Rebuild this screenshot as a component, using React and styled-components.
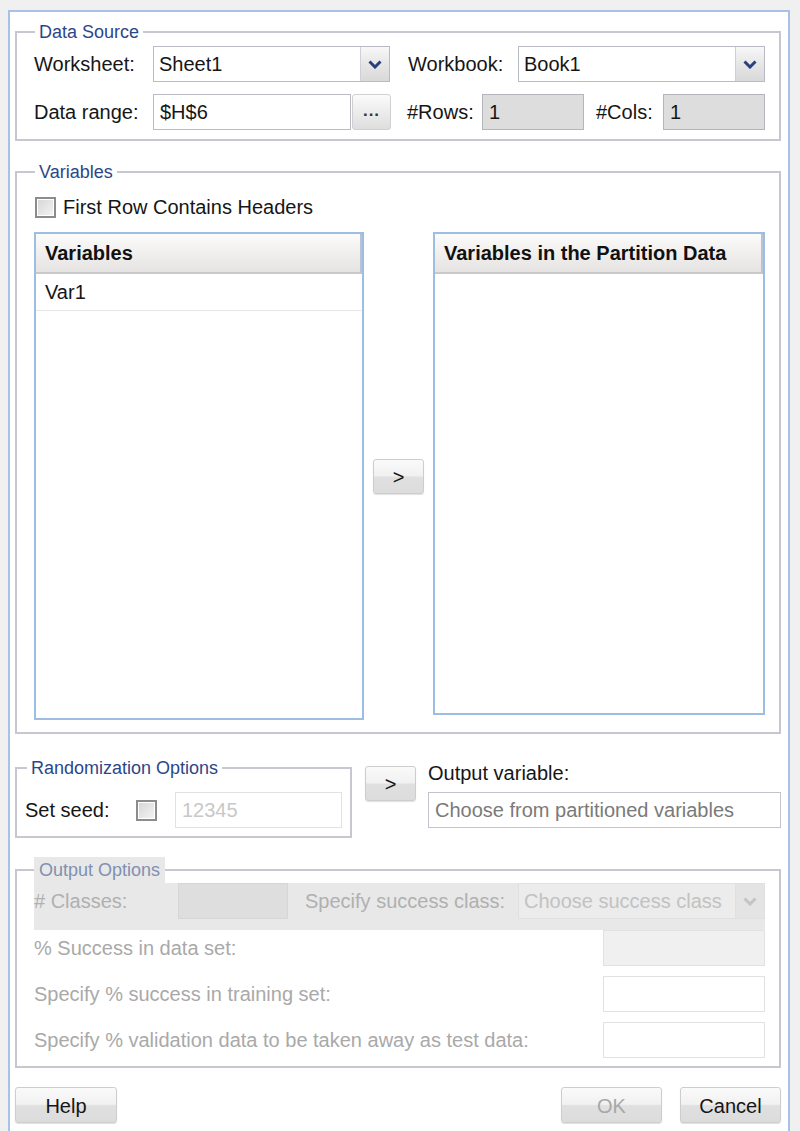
import React from 'react';
import styled, { createGlobalStyle } from 'styled-components';

const GlobalStyle = createGlobalStyle`
  html, body {
    margin: 0;
    padding: 0;
    background: #f0f0f0;
  }
  body {
    font-family: "Liberation Sans", Arial, sans-serif;
    color: #161616;
  }
`;

const Window = styled.div`
  box-sizing: border-box;
  margin: 10px 0 0 8px;
  width: 782px;
  min-height: 1121px;
  background: #fff;
  border: 2px solid #a6c2e6;
  border-bottom: none;
  padding: 9px 7px 0 5px;
`;

const Group = styled.fieldset`
  margin: ${p => p.$mt || 0}px 0 0;
  padding: ${p => p.$pad};
  border: 2px solid #c6c7d0;
  min-width: 0;
  width: ${p => (p.$w ? `${p.$w}px` : 'auto')};
  box-sizing: border-box;
`;

const Legend = styled.legend`
  margin-left: ${p => p.$offset}px;
  padding: 0 ${p => (p.$disabled ? 5 : 4)}px;
  font-size: 18px;
  line-height: ${p => (p.$disabled ? 26 : 22)}px;
  color: ${p => (p.$disabled ? '#8090b2' : '#2b4789')};
  background: ${p => (p.$disabled ? '#e8e8e8' : 'transparent')};
`;

const Row = styled.div`
  display: flex;
  align-items: center;
  height: 36px;
  margin-top: ${p => p.$mt || 0}px;
`;

const Label = styled.div`
  flex: ${p => (p.$w ? 'none' : 1)};
  width: ${p => (p.$w ? `${p.$w}px` : 'auto')};
  margin-left: ${p => p.$ml || 0}px;
  font-size: 20px;
  color: ${p => (p.$disabled ? '#a9a9a9' : '#161616')};
  white-space: nowrap;
`;

const Select = styled.div`
  display: flex;
  box-sizing: border-box;
  width: ${p => p.$w}px;
  height: 36px;
  border: 1px solid ${p => (p.$disabled ? '#e0e0e0' : '#b9bac6')};
  background: ${p => (p.$disabled ? '#ececec' : '#fff')};
`;

const Value = styled.div`
  flex: 1;
  display: flex;
  align-items: center;
  padding-left: 5px;
  font-size: 20px;
  color: ${p => p.$color || '#161616'};
  white-space: nowrap;
  overflow: hidden;
`;

const DropButton = styled.div`
  width: 28px;
  display: flex;
  align-items: center;
  justify-content: center;
  border-left: 1px solid ${p => (p.$disabled ? '#e0e0e0' : '#cfd0d6')};
  background: ${p =>
    p.$disabled ? '#e4e4e4' : 'linear-gradient(#f8f8f8, #e6e6e6 50%, #d9d9d9)'};
`;

const Input = styled.div`
  box-sizing: border-box;
  display: flex;
  align-items: center;
  width: ${p => p.$w}px;
  height: 36px;
  margin-left: ${p => p.$ml || 0}px;
  padding-left: 6px;
  border: 1px solid ${p => p.$border || '#b9bac6'};
  background: ${p => p.$bg || '#fff'};
  font-size: 20px;
  color: ${p => p.$color || '#161616'};
  white-space: nowrap;
`;

const SmallButton = styled.div`
  box-sizing: border-box;
  width: 39px;
  height: 36px;
  margin-left: 1px;
  display: flex;
  align-items: flex-end;
  justify-content: center;
  padding-bottom: 8px;
  border: 1px solid #cfcfd4;
  border-radius: 3px;
  background: linear-gradient(#fbfbfb, #ececec 50%, #dedede);
  font-size: 17px;
  font-weight: bold;
  letter-spacing: 1px;
  color: #333;
`;

const Button = styled.div`
  box-sizing: border-box;
  width: ${p => p.$w}px;
  height: ${p => p.$h || 36}px;
  margin-top: ${p => p.$mt || 0}px;
  margin-left: ${p => p.$ml || 0}px;
  padding-top: 2px;
  display: flex;
  align-items: center;
  justify-content: center;
  border: 1px solid #cdcdcd;
  border-radius: 3px;
  background: linear-gradient(#fafafa 0%, #f1f1f1 48%, #e0e0e0 52%, #dcdcdc 100%);
  box-shadow: 0 1px 1px rgba(0, 0, 0, 0.12);
  font-size: 20px;
  color: ${p => (p.$disabled ? '#a8a8a8' : '#161616')};
  align-self: ${p => p.$self || 'auto'};
  flex: none;
`;

const CheckBox = styled.div`
  box-sizing: border-box;
  width: 21px;
  height: 21px;
  flex: none;
  border: 2px solid #8c8c8c;
  background: linear-gradient(135deg, #d6d6d6, #f4f4f4);
  box-shadow: inset 0 0 0 1px #fff;
`;

const CheckRow = styled.label`
  display: flex;
  align-items: center;
  gap: 7px;
  margin-left: 1px;
  font-size: 20px;
  height: 21px;
`;

const Body = styled.div`
  padding: ${p => p.$pad};
`;

const ListsGrid = styled.div`
  display: grid;
  grid-template-columns: 330px 69px 332px;
  margin-top: 14px;
`;

const List = styled.div`
  box-sizing: border-box;
  height: ${p => p.$h}px;
  border: 2px solid #9dbde3;
  background: #fff;
`;

const ListHeader = styled.div`
  box-sizing: border-box;
  height: 40px;
  display: flex;
  align-items: center;
  padding-left: 9px;
  border-bottom: 2px solid #c9c9c9;
  border-right: 2px solid #b9c3d3;
  background: linear-gradient(#fbfbfa, #efedeb 60%, #e6e4e2);
  font-size: 20px;
  font-weight: bold;
  color: #111;
  white-space: nowrap;
`;

const ListItem = styled.div`
  height: 36px;
  display: flex;
  align-items: center;
  padding-left: 9px;
  border-bottom: 1px solid #e6e6e6;
  font-size: 20px;
`;

const MidRow = styled.div`
  display: flex;
  align-items: flex-start;
  margin-top: 23px;
`;

const OutputColumn = styled.div`
  margin-left: 12px;
  margin-top: 5px;
  display: flex;
  flex-direction: column;
  gap: 7px;
`;

const Band = styled.div`
  display: flex;
  align-items: flex-start;
  height: 47px;
  background: #e8e8e8;
`;

const BandLabel = styled.div`
  width: ${p => p.$w}px;
  margin-left: ${p => p.$ml || 0}px;
  height: 36px;
  display: flex;
  align-items: center;
  font-size: 20px;
  color: #b0b0b0;
  white-space: nowrap;
`;

const Footer = styled.div`
  display: flex;
  align-items: center;
  margin-top: 19px;
`;

const Spacer = styled.div`
  flex: 1;
`;

const Chevron = ({ color = '#2a3f7c' }) => (
  <svg width="14" height="9" viewBox="0 0 14 9">
    <path d="M1.5 1.5 L7 7 L12.5 1.5" fill="none" stroke={color} strokeWidth="3" />
  </svg>
);

export default function App() {
  return (
    <>
      <GlobalStyle />
      <Window>
        <Group $pad="0">
          <Legend $offset={18}>Data Source</Legend>
          <Body $pad="3px 14px 9px 17px">
            <Row>
              <Label $w={119}>Worksheet:</Label>
              <Select $w={237}>
                <Value>Sheet1</Value>
                <DropButton>
                  <Chevron />
                </DropButton>
              </Select>
              <Label $w={110} $ml={18}>Workbook:</Label>
              <Select $w={247}>
                <Value>Book1</Value>
                <DropButton>
                  <Chevron />
                </DropButton>
              </Select>
            </Row>
            <Row $mt={12}>
              <Label $w={119}>Data range:</Label>
              <Input $w={198}>$H$6</Input>
              <SmallButton>...</SmallButton>
              <Label $w={75} $ml={16}>#Rows:</Label>
              <Input $w={102} $bg="#dddddd" $border="#b3b4bd">1</Input>
              <Label $w={67} $ml={12}>#Cols:</Label>
              <Input $w={102} $bg="#dddddd" $border="#b3b4bd">1</Input>
            </Row>
          </Body>
        </Group>

        <Group $pad="0" $mt={20}>
          <Legend $offset={18}>Variables</Legend>
          <Body $pad="14px 14px 12px 17px">
            <CheckRow>
              <CheckBox />
              First Row Contains Headers
            </CheckRow>
            <ListsGrid>
              <List $h={488}>
                <ListHeader>Variables</ListHeader>
                <ListItem>Var1</ListItem>
              </List>
              <Button $w={51} $h={35} $self="center" $ml={9}>&gt;</Button>
              <List $h={483}>
                <ListHeader>Variables in the Partition Data</ListHeader>
              </List>
            </ListsGrid>
          </Body>
        </Group>

        <MidRow>
          <Group $pad="0" $w={339}>
            <Legend $offset={10}>Randomization Options</Legend>
            <Body $pad="13px 8px 8px 8px">
              <Row>
                <Label $w={111}>Set seed:</Label>
                <CheckBox />
                <Input $w={169} $ml={18} $border="#e2e2e2" $color="#c8c8c8">12345</Input>
              </Row>
            </Body>
          </Group>
          <Button $w={51} $h={35} $mt={9} $ml={13}>&gt;</Button>
          <OutputColumn>
            <Label>Output variable:</Label>
            <Input $w={353} $color="#7a7a7a" $border="#c4c5cc">
              Choose from partitioned variables
            </Input>
          </OutputColumn>
        </MidRow>

        <Group $pad="0" $mt={19}>
          <Legend $offset={17} $disabled>Output Options</Legend>
          <Body $pad="0 14px 8px 17px">
            <Band>
              <BandLabel $w={144}># Classes:</BandLabel>
              <Input $w={110} $bg="#dedede" $border="#d6d6d6" />
              <BandLabel $w={213} $ml={17}>Specify success class:</BandLabel>
              <Select $w={247} $disabled>
                <Value $color="#c2c2c2">Choose success class</Value>
                <DropButton $disabled>
                  <Chevron color="#c4c4c4" />
                </DropButton>
              </Select>
            </Band>
            <Row>
              <Label $disabled>% Success in data set:</Label>
              <Input $w={162} $bg="#f0f0f0" $border="#e2e2e2" />
            </Row>
            <Row $mt={10}>
              <Label $disabled>Specify % success in training set:</Label>
              <Input $w={162} $border="#e2e2e2" />
            </Row>
            <Row $mt={10}>
              <Label $disabled>Specify % validation data to be taken away as test data:</Label>
              <Input $w={162} $border="#e2e2e2" />
            </Row>
          </Body>
        </Group>

        <Footer>
          <Button $w={102}>Help</Button>
          <Spacer />
          <Button $w={101} $disabled>OK</Button>
          <Button $w={101} $ml={18}>Cancel</Button>
        </Footer>
      </Window>
    </>
  );
}
